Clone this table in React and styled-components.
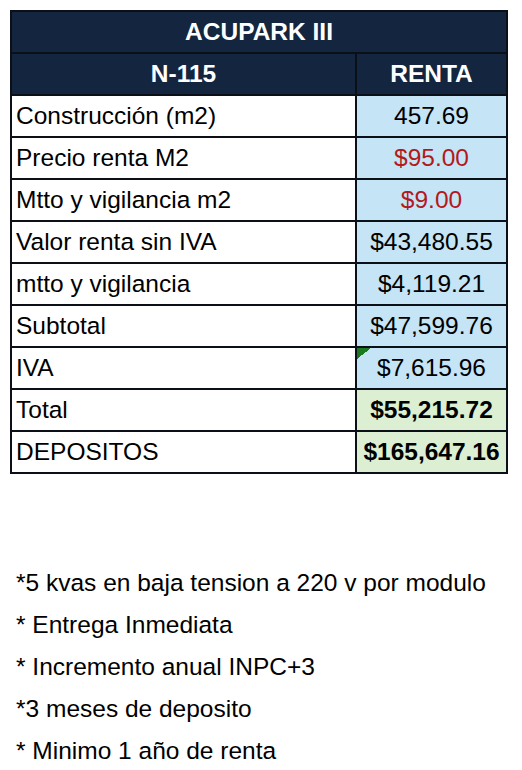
import React from "react";
import styled, { createGlobalStyle } from "styled-components";

const GlobalStyle = createGlobalStyle`
  html, body {
    margin: 0;
    padding: 0;
    background: #ffffff;
  }
  body {
    font-family: "Liberation Sans", Arial, sans-serif;
    color: #000;
  }
`;

const ROWS = [
  { label: "Construcción (m2)", value: "457.69", tone: "blue" },
  { label: "Precio renta M2", value: "$95.00", tone: "blue", red: true },
  { label: "Mtto y vigilancia m2", value: "$9.00", tone: "blue", red: true },
  { label: "Valor renta sin IVA", value: "$43,480.55", tone: "blue" },
  { label: "mtto y vigilancia", value: "$4,119.21", tone: "blue" },
  { label: "Subtotal", value: "$47,599.76", tone: "blue" },
  { label: "IVA", value: "$7,615.96", tone: "blue", flag: true },
  { label: "Total", value: "$55,215.72", tone: "green", bold: true },
  { label: "DEPOSITOS", value: "$165,647.16", tone: "green", bold: true },
];

const NOTES = [
  "*5 kvas en baja tension a 220 v por modulo",
  "* Entrega Inmediata",
  "* Incremento anual INPC+3",
  "*3 meses de deposito",
  "* Minimo 1 año de renta",
];

const FILLS = {
  blue: "#c5e4f5",
  green: "#dcefd3",
};

// green "error" marker Excel draws in the corner of a cell
const FLAG_BG =
  "linear-gradient(to bottom right, #1b7a1f 50%, transparent 50%) no-repeat 0 0 / 14px 11px";

function App() {
  return (
    <Page>
      <GlobalStyle />
      <Sheet>
        <colgroup>
          <col style={{ width: 345 }} />
          <col style={{ width: 151 }} />
        </colgroup>
        <tbody>
          <tr>
            <TitleCell colSpan={2}>ACUPARK III</TitleCell>
          </tr>
          <tr>
            <HeadCell>N-115</HeadCell>
            <HeadCell>RENTA</HeadCell>
          </tr>
          {ROWS.map((row) => (
            <tr key={row.label}>
              <LabelCell>{row.label}</LabelCell>
              <ValueCell
                $tone={row.tone}
                $red={row.red}
                $bold={row.bold}
                $flag={row.flag}
              >
                {row.value}
              </ValueCell>
            </tr>
          ))}
        </tbody>
      </Sheet>

      <Notes>
        {NOTES.map((note) => (
          <Note key={note}>{note}</Note>
        ))}
      </Notes>
    </Page>
  );
}

const Page = styled.div`
  padding: 10px 0 0 10px;
  width: 522px;
  box-sizing: border-box;
`;

const Sheet = styled.table`
  border-collapse: collapse;
  width: 496px;
  table-layout: fixed;
  font-size: 24.5px;

  tr {
    height: 42px;
  }

  td {
    border: 2px solid #0a0f18;
    padding: 0;
  }
`;

const TitleCell = styled.td`
  background: #13253f;
  color: #ffffff;
  font-weight: 700;
  text-align: center;
`;

const HeadCell = styled.td`
  background: #13253f;
  color: #ffffff;
  font-weight: 700;
  text-align: center;
`;

const LabelCell = styled.td`
  padding-left: 4px !important;
  background: #ffffff;
`;

const ValueCell = styled.td`
  text-align: center;
  background: ${(p) => (p.$flag ? `${FLAG_BG}, ` : "")}${(p) => FILLS[p.$tone]};
  color: ${(p) => (p.$red ? "#b3191c" : "#000")};
  font-weight: ${(p) => (p.$bold ? 700 : 400)};
`;

const Notes = styled.div`
  margin-top: 88px;
  padding-left: 6px;
  display: flex;
  flex-direction: column;
`;

const Note = styled.div`
  font-size: 24.5px;
  line-height: 42px;
`;

export default App;
